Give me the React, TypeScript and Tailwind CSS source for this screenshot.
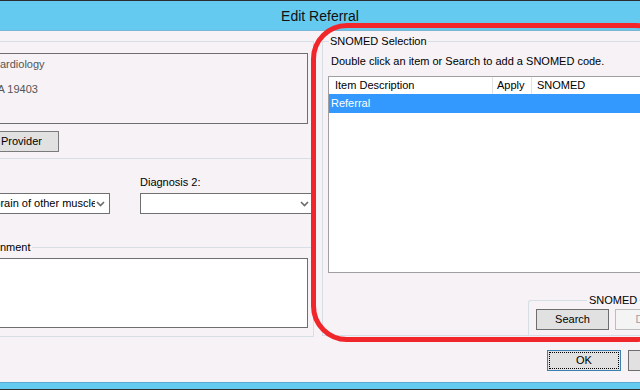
const font = { fontFamily: '"Liberation Sans", Arial, sans-serif' };

function Chevron() {
  return (
    <svg width="9" height="6" viewBox="0 0 9 6" className="shrink-0">
      <path d="M1 1 L4.5 4.5 L8 1" fill="none" stroke="#6a6a6a" strokeWidth="1.6" />
    </svg>
  );
}

export default function App() {
  return (
    <div
      className="relative flex h-[390px] w-[640px] flex-col overflow-hidden bg-[#f6f2f6] text-[11px] text-black"
      style={font}
    >
      {/* Title bar */}
      <div className="flex h-[31px] shrink-0 items-center justify-center border-t border-b border-t-[#2d2d2d] border-b-[#7cb5d4] bg-[#65caef]">
        <span className="text-[14px] leading-none text-[#111]">Edit Referral</span>
      </div>

      {/* Main area */}
      <div className="flex h-[306px] shrink-0 pt-[10px]">
        {/* Left column */}
        <div className="flex w-[314px] shrink-0 flex-col">
          <div className="h-[118px] border-t border-r border-b border-[#d6dee6] pr-[5px] pt-[11px]">
            <div className="h-[71px] border border-l-0 border-[#6e6e6e] pt-[3px] leading-[14px] text-[#555]">
              <div className="-ml-[8px] whitespace-nowrap">Cardiology</div>
              <div className="-ml-[9px] mt-[11px] whitespace-nowrap">PA 19403</div>
            </div>
            <div className="mt-[7px] flex h-[21px] w-[59px] items-center border border-l-0 border-[#7a7a7a] bg-[#e1e1e1] pl-[1px]">
              Provider
            </div>
          </div>

          <div className="flex h-[88px] flex-col">
            <div className="ml-[140px] mt-[16px] leading-[14px]">Diagnosis 2:</div>
            <div className="mt-[4px] flex gap-[30px]">
              <div className="flex h-[21px] w-[110px] shrink-0 items-center justify-between border border-l-0 border-[#707070] bg-white pr-[4px]">
                <div className="w-[95px] overflow-hidden">
                  <span className="-ml-[13px] block whitespace-nowrap">Sprain of other muscle</span>
                </div>
                <Chevron />
              </div>
              <div className="flex h-[21px] w-[175px] shrink-0 items-center justify-end border border-[#707070] bg-white pr-[5px]">
                <Chevron />
              </div>
            </div>
          </div>

          <div className="relative h-[90px] border-t border-r border-b border-[#d6dee6] pr-[5px] pt-[10px]">
            <span className="absolute -top-[8px] -left-[27px] whitespace-nowrap bg-[#f6f2f6] pr-[2px] leading-[14px]">
              Assignment
            </span>
            <div className="h-[70px] border border-l-0 border-[#6e6e6e] bg-white" />
          </div>
        </div>

        {/* Right column: SNOMED Selection */}
        <div className="relative ml-[8px] h-[295px] flex-1 border-t border-l border-b border-[#d6dee6] pl-[5px]">
          <span className="absolute -top-[8px] left-[6px] bg-[#f6f2f6] px-[1px] leading-[14px]">
            SNOMED Selection
          </span>
          <div className="mt-[12px] pl-[3px] leading-[14px]">
            Double click an item or Search to add a SNOMED code.
          </div>
          <div className="mt-[8px] h-[197px] border border-r-0 border-[#a0a0a0] bg-white">
            <div className="flex h-[17px] items-center leading-none">
              <div className="flex h-full w-[164px] items-center border-r border-[#e3e3e3] pl-[6px]">
                Item Description
              </div>
              <div className="flex h-full w-[39px] items-center border-r border-[#e3e3e3] pl-[4px]">
                Apply
              </div>
              <div className="flex h-full flex-1 items-center pl-[5px]">SNOMED</div>
            </div>
            <div className="flex h-[19px] items-center bg-[#3399ff] pl-[2px] text-white">Referral</div>
          </div>

          <div className="relative mt-[27px] ml-[200px] h-[36px] rounded-tl-[3px] border-t border-l border-[#d6dee6] pl-[7px] pt-[8px]">
            <span className="absolute -top-[8px] left-[58px] bg-[#f6f2f6] px-[2px] leading-[14px]">
              SNOMED
            </span>
            <div className="flex gap-[6px]">
              <div className="flex h-[21px] w-[73px] shrink-0 items-center justify-center border border-[#6e6e6e] bg-[#e1e1e1]">
                Search
              </div>
              <div className="flex h-[21px] w-[73px] shrink-0 items-center justify-center border border-[#bcbcbc] bg-[#f4f4f4] text-[#a0a0a0]">
                Delete
              </div>
            </div>
          </div>
        </div>
      </div>

      {/* Footer buttons */}
      <div className="flex flex-1 items-start pl-[547px] pt-[13px]">
        <div className="flex h-[21px] w-[74px] shrink-0 items-center justify-center border border-[#3c7fb1] bg-[#e1e1e1] p-[1px]">
          <div className="flex h-full w-full items-center justify-center border border-dotted border-black">
            OK
          </div>
        </div>
        <div className="ml-[7px] flex h-[21px] w-[74px] shrink-0 items-center justify-center border border-[#6e6e6e] bg-[#e1e1e1]">
          Cancel
        </div>
      </div>

      {/* Bottom frame */}
      <div className="h-[8px] shrink-0 border-t border-b border-t-[#5aa9d3] border-b-[#2d2d2d] bg-[#65caef]" />

      {/* Red annotation outline */}
      <div className="pointer-events-none absolute top-[23px] left-[311px] h-[319px] w-[360px] rounded-[36px] border-[5px] border-[#f0262b]" />
    </div>
  );
}
